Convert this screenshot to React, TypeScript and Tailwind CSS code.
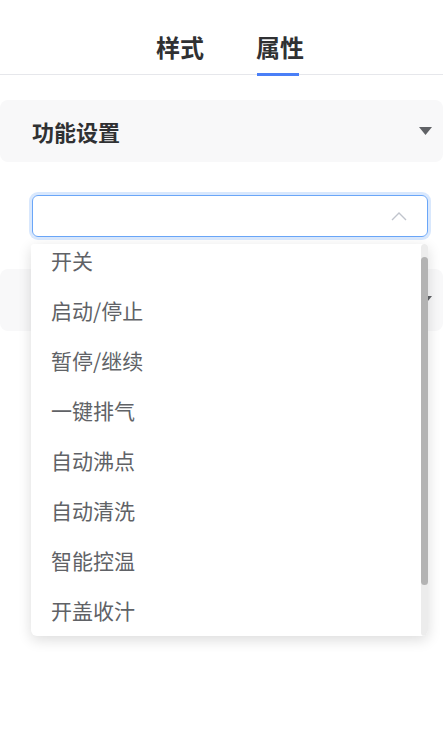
import React from "react";

const items = ["开关", "启动/停止", "暂停/继续", "一键排气", "自动沸点", "自动清洗", "智能控温", "开盖收汁"];

function Caret() {
  return (
    <svg width="13" height="8" viewBox="0 0 13 8">
      <path d="M0 0 L13 0 L6.5 8 Z" fill="#606266" />
    </svg>
  );
}

function Panel({ title }: { title: string }) {
  return (
    <div className="h-[62px] rounded-lg bg-[#f8f8f9] flex items-center justify-between pl-[32px] pr-[11px]">
      <span className="text-[22px] font-semibold text-[#303133] leading-none">{title}</span>
      <Caret />
    </div>
  );
}

export default function App() {
  return (
    <div
      className="relative w-[443px] h-[741px] bg-white overflow-hidden"
      style={{ fontFamily: '"Noto Sans CJK SC", "Noto Sans", sans-serif' }}
    >
      <div className="h-[75px] flex justify-center gap-[52px] border-b-[1.5px] border-[#e6e7eb] pl-[17px]">
        <div className="relative flex items-center pt-[20px]">
          <span className="text-[24px] font-semibold text-[#303133] leading-none">样式</span>
        </div>
        <div className="relative flex items-center pt-[20px]">
          <span className="text-[24px] font-semibold text-[#303133] leading-none">属性</span>
          <div className="absolute left-[1px] bottom-[-1.5px] w-[42px] h-[3px] bg-[#4a7ff7]" />
        </div>
      </div>

      <div className="mt-[25px]">
        <Panel title="功能设置" />
      </div>

      <div className="mt-[33px] px-[32px] pr-[15px]">
        <div className="h-[42px] rounded-[6px] border-[1.5px] border-[#6aa6f8] ring-[3px] ring-[#d9e8fd] flex items-center justify-end pr-[20px]">
          <svg width="16" height="9" viewBox="0 0 16 9">
            <path d="M1 8 L8 1 L15 8" fill="none" stroke="#c0c4cc" strokeWidth="1.4" />
          </svg>
        </div>
      </div>

      <div className="mt-[32px]">
        <Panel title="" />
      </div>

      <div className="absolute left-[31px] top-[244px] w-[397px] h-[392px] bg-white rounded-b-[6px] rounded-t-[3px] shadow-[0_4px_14px_rgba(0,0,0,0.14)] overflow-hidden">
        <div className="-mt-[9px]">
          {items.map((t) => (
            <div key={t} className="h-[50px] flex items-center pl-[20px] text-[21px] text-[#606266] leading-none">
              {t}
            </div>
          ))}
        </div>
        <div className="absolute right-0 top-0 w-[7px] h-full bg-[#ececec] rounded-full">
          <div className="absolute left-0 top-[13px] w-[7px] h-[328px] bg-[#b3b3b3] rounded-full" />
        </div>
      </div>
    </div>
  );
}
